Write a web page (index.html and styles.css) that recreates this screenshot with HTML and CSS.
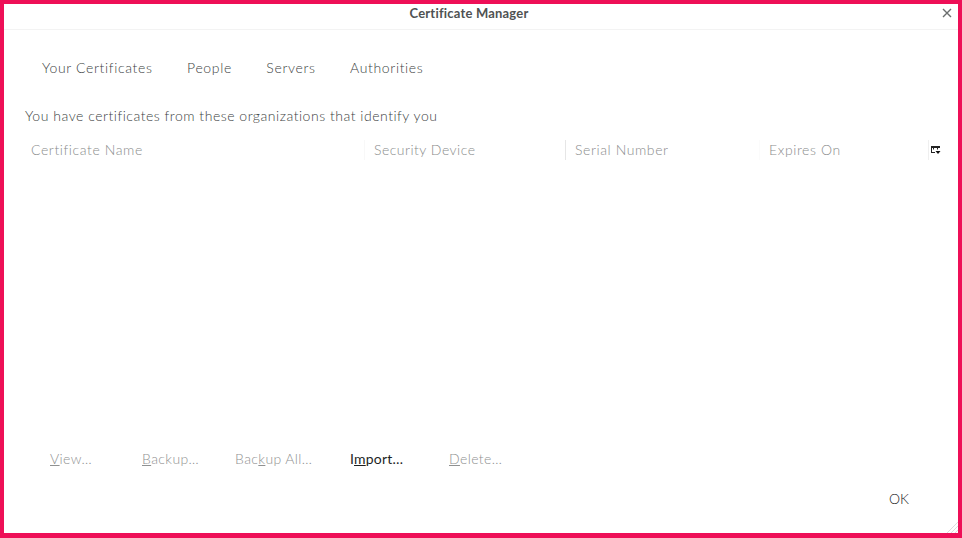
FILE: index.html
```html
<!DOCTYPE html>
<html lang="en">
<head>
<meta charset="utf-8">
<title>Certificate Manager</title>
<link rel="stylesheet" href="styles.css">
</head>
<body>
<div class="window">
  <header class="titlebar">
    <span class="title">Certificate Manager</span>
    <svg class="close" width="10" height="10" viewBox="0 0 10 10"><path d="M1 1L9 9M9 1L1 9" stroke="#6a6e6e" stroke-width="1.4" fill="none"/></svg>
  </header>
  <nav class="tabs">
    <span class="tab">Your Certificates</span>
    <span class="tab">People</span>
    <span class="tab">Servers</span>
    <span class="tab">Authorities</span>
  </nav>
  <p class="intro">You have certificates from these organizations that identify you</p>
  <div class="tree-head">
    <span class="col col-name">Certificate Name</span>
    <span class="col col-device">Security Device</span>
    <span class="col col-serial">Serial Number</span>
    <span class="col col-expires">Expires On</span>
    <span class="col-picker">
      <svg class="picker-icon" width="10" height="9" viewBox="0 0 10 9"><path d="M0 0H9V2H7V3.500H6V2H3V3.500H2V2H1V6H4V7H0Z" fill="#222"/><path d="M4.500 5H9.500L7 8Z" fill="#111"/></svg>
    </span>
  </div>
  <div class="tree-body"></div>
  <div class="actions">
    <button class="btn btn-view" disabled><u>V</u>iew…</button>
    <button class="btn btn-backup" disabled><u>B</u>ackup…</button>
    <button class="btn btn-all" disabled>Bac<u>k</u>up All…</button>
    <button class="btn btn-import">I<u>m</u>port…</button>
    <button class="btn btn-delete" disabled><u>D</u>elete…</button>
  </div>
  <div class="footer">
    <button class="btn ok">OK</button>
  </div>
  <svg class="grip" width="12" height="12" viewBox="0 0 12 12"><path d="M1 12L12 1M5 12L12 5M9 12L12 9" stroke="#dcdcdc" stroke-width="1" fill="none"/></svg>
</div>
</body>
</html>
```
FILE: styles.css
```css
* { box-sizing: border-box; }
html, body { margin: 0; height: 100%; }
body { background: #fff; font-family: Lato, "Open Sans", sans-serif; font-size: 14px; }
.window {
  position: relative;
  width: 962px;
  height: 538px;
  border: 4px solid #ee0f57;
  border-bottom-width: 5px;
  background: #fff;
  display: flex;
  flex-direction: column;
  color: #3c3f3f;
}
.titlebar {
  height: 26px;
  flex: none;
  border-bottom: 1px solid #f3f3f3;
  display: flex;
  align-items: center;
  justify-content: center;
  position: relative;
  padding: 0 24px 8px 0;
}
.title { font-size: 13px; font-weight: 700; color: #4f5252; letter-spacing: 0.2px; }
.close { position: absolute; right: 6px; top: 4px; }
.tabs { display: flex; gap: 34.5px; padding: 28px 0 0 38px; height: 76px; flex: none; }
.tab { font-size: 14px; font-weight: 300; letter-spacing: 0.65px; line-height: 20px; color: #3c3f3f; }
.intro { margin: 0; padding: 0 0 0 21px; font-size: 14px; font-weight: 300; letter-spacing: 0.52px; line-height: 20px; height: 24px; flex: none; color: #3c3f3f; }
.tree-head { display: flex; height: 20px; margin-top: 10px; flex: none; align-items: center; padding-left: 21px; }
.col { font-size: 14px; font-weight: 300; letter-spacing: 0.6px; color: #8a8c8c; padding-left: 6px; height: 20px; line-height: 20px; border-left: 1px solid transparent; }
.col-name { width: 339px; border-left: none; }
.col-device { width: 201px; border-left-color: #f8f8f8; padding-left: 9px; letter-spacing: 0.5px; }
.col-serial { width: 194px; border-left-color: #e6e6e6; padding-left: 9px; }
.col-expires { width: 169px; border-left-color: #fbfbfb; padding-left: 9px; }
.col-picker { width: 20px; height: 20px; border-left: 1px solid #efefef; display: flex; align-items: center; padding: 1px 0 0 2px; }
.tree-body { flex: 1; }
.actions { display: flex; height: 20px; flex: none; margin-bottom: 20px; padding-left: 46px; }
.btn { background: none; border: 0; padding: 0; margin: 0; font: inherit; font-size: 14px; font-weight: 300; letter-spacing: 0.4px; line-height: 20px; text-align: left; color: #1d1f1f; }
.btn:disabled { color: #8f9191; }
.btn-view { width: 92px; }
.btn-backup { width: 93px; }
.btn-all { width: 115px; }
.btn-import { width: 99px; font-weight: 400; letter-spacing: 0.2px; }
.btn-delete { width: 60px; }
.footer { display: flex; justify-content: flex-end; height: 20px; flex: none; margin-bottom: 24px; padding-right: 49px; }
.ok { letter-spacing: 0; color: #222; }
.grip { position: absolute; right: 0; bottom: 0; }
```
